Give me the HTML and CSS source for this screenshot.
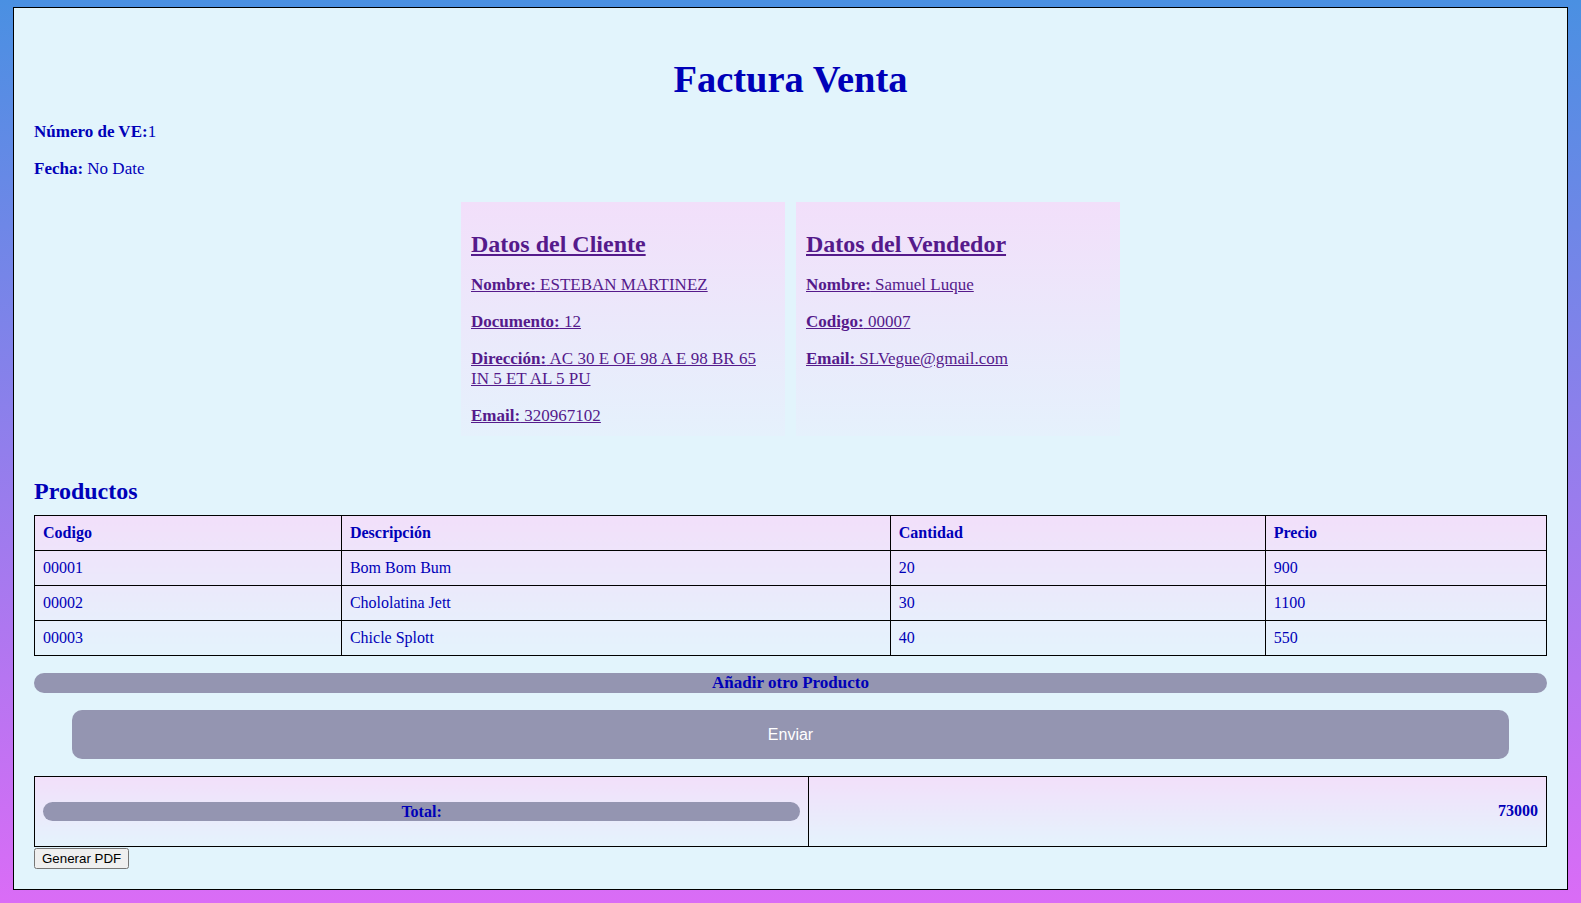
FILE: index.html
```html
<!DOCTYPE html>
<html lang="es">
<head>
<meta charset="utf-8">
<title>Factura Venta</title>
<link rel="stylesheet" href="styles.css">
</head>
<body>
<div class="factura">
  <h1 class="titulo">Factura Venta</h1>
  <p class="meta"><strong>Número de VE:</strong>1</p>
  <p class="meta"><strong>Fecha:</strong> No Date</p>

  <div class="cards">
    <div class="card">
      <h2>Datos del Cliente</h2>
      <p><strong>Nombre:</strong> ESTEBAN MARTINEZ</p>
      <p><strong>Documento:</strong> 12</p>
      <p><strong>Dirección:</strong> AC 30 E OE 98 A E 98 BR 65 IN 5 ET AL 5 PU</p>
      <p><strong>Email:</strong> 320967102</p>
    </div>
    <div class="card">
      <h2>Datos del Vendedor</h2>
      <p><strong>Nombre:</strong> Samuel Luque</p>
      <p><strong>Codigo:</strong> 00007</p>
      <p><strong>Email:</strong> SLVegue@gmail.com</p>
    </div>
  </div>

  <h2 class="productos">Productos</h2>
  <table class="tabla">
    <thead>
      <tr>
        <th class="col-cod">Codigo</th>
        <th class="col-desc">Descripción</th>
        <th class="col-cant">Cantidad</th>
        <th class="col-precio">Precio</th>
      </tr>
    </thead>
    <tbody>
      <tr><td>00001</td><td>Bom Bom Bum</td><td>20</td><td>900</td></tr>
      <tr><td>00002</td><td>Chololatina Jett</td><td>30</td><td>1100</td></tr>
      <tr><td>00003</td><td>Chicle Splott</td><td>40</td><td>550</td></tr>
    </tbody>
  </table>

  <button class="btn-add" type="button">Añadir otro Producto</button>
  <button class="btn-enviar" type="button">Enviar</button>

  <table class="total">
    <tr>
      <td class="total-label"><button class="btn-total" type="button">Total:</button></td>
      <td class="total-valor">73000</td>
    </tr>
  </table>
  <button class="btn-pdf" type="button">Generar PDF</button>
</div>
</body>
</html>
```
FILE: styles.css
```css
html {
  min-height: 100%;
  background: linear-gradient(to bottom, #4a90e2, #da6cf6);
}

body {
  margin: 0;
  padding: 7px 13px 13px;
  font-family: "Liberation Serif", "Times New Roman", serif;
}

.factura {
  border: 1px solid #000;
  background: #e2f4fc;
  padding: 20px 20px 20px;
  color: #0000b8;
  font-size: 17px;
}

.titulo {
  font-size: 38.5px;
  text-align: center;
  margin: 29px 0 21px;
}

.meta {
  margin: 17px 0;
}

.cards {
  display: flex;
  justify-content: center;
  gap: 11px;
  margin: 22.5px 0 0;
}

.card {
  width: 304px;
  padding: 10px;
  background: linear-gradient(to bottom, #f2dffa, #e5f1fc);
  color: #551a8b;
  text-decoration: underline;
}

.card h2 {
  font-size: 24px;
  margin: 19px 0 17px;
}

.card p {
  margin: 17px 0;
}

.card p:last-child {
  margin-bottom: 0;
}

.productos {
  font-size: 24px;
  margin: 42.5px 0 10px;
}

.tabla {
  width: 100%;
  border-collapse: collapse;
  font-size: 16px;
  color: #0000b8;
  background: linear-gradient(to bottom, #f2dffa, #e4f3fc);
}

.tabla th,
.tabla td {
  border: 1px solid #000;
  padding: 8px;
  text-align: left;
}

.col-cod { width: 20.3%; }
.col-desc { width: 36.3%; }
.col-cant { width: 24.8%; }
.col-precio { width: 18.6%; }

.btn-add {
  display: block;
  width: 100%;
  margin-top: 17px;
  padding: 0;
  border: none;
  border-radius: 10px;
  background: #9495b1;
  color: #0000b8;
  font-family: "Liberation Serif", "Times New Roman", serif;
  font-size: 17px;
  font-weight: bold;
  line-height: normal;
}

.btn-enviar {
  display: block;
  width: 95%;
  margin: 17px auto 0;
  padding: 15.5px;
  border: none;
  border-radius: 10px;
  background: #9495b1;
  color: #fff;
  font-family: "Liberation Sans", Arial, sans-serif;
  font-size: 16px;
  line-height: normal;
}

.total {
  width: 100%;
  margin-top: 16.5px;
  border-collapse: collapse;
  font-size: 16px;
  color: #0000b8;
  background: linear-gradient(to bottom, #f2dffa, #e4f3fc);
}

.total td {
  border: 1px solid #000;
  padding: 25px 8px;
  vertical-align: middle;
}

.total-label {
  width: 51.2%;
}

.total-valor {
  text-align: right;
  font-weight: bold;
}

.btn-total {
  display: block;
  width: 100%;
  padding: 0;
  border: none;
  border-radius: 10px;
  background: #9495b1;
  color: #0000b8;
  font-family: "Liberation Serif", "Times New Roman", serif;
  font-size: 16px;
  font-weight: bold;
  line-height: 19.5px;
}

.btn-pdf {
  display: block;
  margin-top: 1px;
  font-family: "Liberation Sans", Arial, sans-serif;
  font-size: 13.333px;
}
```
